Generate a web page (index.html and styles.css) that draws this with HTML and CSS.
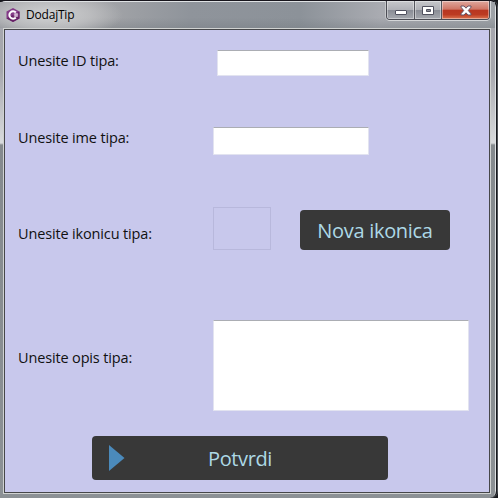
FILE: index.html
```html
<!DOCTYPE html>
<html lang="sr-Latn">
<head>
<meta charset="utf-8">
<title>DodajTip</title>
<link rel="stylesheet" href="styles.css">
</head>
<body>
<div class="window">
  <header class="titlebar">
    <svg class="app-icon" width="14" height="14" viewBox="0 0 14 14">
      <path d="M7 0 13.500 3.500v7L7 14 .5 10.500v-7z" fill="#843b88"/>
      <path d="M.5 10.500 13.500 3.500v7L7 14z" fill="#652065"/>
      <path d="M9.800 4.500A3.700 3.700 0 1 0 9.800 9.500" fill="none" stroke="#fff" stroke-width="2"/>
      <path d="M7.800 6.200h4.400M7.800 7.900h4.400M9.200 5v4M10.900 5v4" stroke="#f2e5f3" stroke-width=".8"/>
    </svg>
    <h1 class="title">DodajTip</h1>
    <div class="controls">
      <button class="control minimize" aria-label="Minimize"><svg width="14" height="12" viewBox="0 0 14 12"><rect x="1.500" y="5.500" width="11" height="4" rx=".5" fill="#fff" stroke="#50515f"/></svg></button>
      <button class="control maximize" aria-label="Maximize"><svg width="14" height="12" viewBox="0 0 14 12"><path fill-rule="evenodd" d="M1.500 1.500h11v8h-11zM5.500 4.500h4v2h-4z" fill="#fff" stroke="#50515f"/></svg></button>
      <button class="control close" aria-label="Close"><svg width="14" height="12" viewBox="0 0 14 12"><path d="M2 1h3l2 2.200L9 1h3v1.200L9.300 5.500 12 8.800V10H9L7 7.800 5 10H2V8.800l2.700-3.300L2 2.200z" fill="#fff" stroke="#645264"/></svg></button>
    </div>
  </header>
  <main class="client">
    <div class="row row-id"><label class="label" for="type-id">Unesite ID tipa:</label><input class="field" id="type-id"></div>
    <div class="row row-name"><label class="label" for="type-name">Unesite ime tipa:</label><input class="field" id="type-name"></div>
    <div class="row row-icon"><span class="label">Unesite ikonicu tipa:</span><div class="preview"></div><button class="action pick">Nova ikonica</button></div>
    <div class="row row-description"><label class="label" for="type-description">Unesite opis tipa:</label><textarea class="field" id="type-description"></textarea></div>
    <button class="action confirm"><svg class="arrow" width="16" height="26" viewBox="0 0 16 26"><path d="M0 0 15.500 13 0 26z" fill="#4b8abb"/></svg><span class="confirm-text">Potvrdi</span></button>
  </main>
</div>
</body>
</html>
```

FILE: styles.css
```css
* { box-sizing: border-box; }
body { margin: 0; background: #17191d; font-family: "Open Sans", "Noto Sans", sans-serif; color: #111; }
button { font-family: inherit; padding: 0; margin: 0; border: 0; }
.window {
  width: 497px; height: 498px; padding: 1px 5px 0 4px;
  border-top: 1px solid #17151c;
  border-right: 1px solid #17191d;
  border-radius: 5px 7px 7px 0;
  background: linear-gradient(#a5a6ad 0, #a7a8ae 70px, #d9dbdd 142px, #858a8e 144px, #8c9195 100%);
  box-shadow: inset -1px 1px #dfe2e4, 1px 0 #505358;
}
.titlebar {
  display: flex; height: 26px; margin: 0 -4px 0 -4px; padding-left: 6px;
  background:
    radial-gradient(ellipse 75px 24px at 48px 13px, #d0d1d2 0, #c1c2c4cc 55%, transparent 100%),
    linear-gradient(transparent 60%, #747a8066),
    linear-gradient(90deg, #9b9ca1, #a6a7aa 90px, #8f949b 190px, #8c9299 300px, #a9abb1 380px, #9ea2a7);
}
.app-icon { margin-top: 6px; }
.title { margin: 5px 0 0 6px; font-size: 12px; line-height: 16px; font-weight: 400; letter-spacing: -.2px; color: #000; }
.controls {
  display: flex; height: 19px; margin: -1px 5px 0 auto;
  border: 1px solid #4b4c54; border-top: 0; border-radius: 0 0 4px 4px;
  box-shadow: 0 1px #d4d6d8, 1px 0 #d4d6d8, -1px 0 #c5c7ca; overflow: hidden;
}
.control {
  display: flex; justify-content: center; align-items: center; height: 18px; padding-top: 2px;
  border-right: 1px solid #55565d;
  background: linear-gradient(#c6c7cb 0, #b0b1b7 48%, #8a8d96 52%, #a5a8ae);
  box-shadow: inset 0 0 0 1px #ffffff66;
}
.minimize { width: 28px; }
.maximize { width: 27px; }
.close { width: 47px; border: 0; background: linear-gradient(#dfa89e 0, #cf7565 46%, #b83621 50%, #bc3b22 75%, #db7450); }
.client {
  width: 486px; height: 464px; display: flex; flex-direction: column; align-items: flex-start;
  border: 1px solid #46474a; outline: 1px solid #d0d2d1; outline-offset: 0;
  margin-top: 1px; background: #c8c8ec;
}
.row { display: flex; align-items: flex-start; padding-left: 13px; }
.label { flex: none; width: 195px; font-size: 14.500px; line-height: 20px; letter-spacing: -.15px; }
.field {
  display: block; width: 157px; margin: 0; padding: 2px; resize: none; outline: 0;
  border: 1px solid #e2e3f0; border-top-color: #abadb3; border-radius: 1px; background: #fff;
}
.row-id { height: 97px; padding-top: 20px; }
.row-id .field { width: 152px; height: 26px; margin-left: 4px; }
.row-name { height: 80px; }
.row-name .field { width: 156px; height: 28px; }
.row-id .label, .row-name .label { margin-top: 1px; }
.row-icon { height: 113px; }
.row-icon .label { margin-top: 17px; }
.preview { width: 58px; height: 43px; border: 1px solid #b8b8dc; }
.action { display: flex; align-items: center; border-radius: 4px; background: #383838; color: #add8e6; font-size: 20px; line-height: 28px; }
.pick { width: 150px; height: 40px; margin: 3px 0 0 29px; padding-top: 1px; justify-content: center; letter-spacing: -.3px; }
.row-description { height: 116px; }
.row-description .label { margin-top: 28px; }
.row-description .field { width: 256px; height: 91px; }
.confirm { width: 296px; height: 44px; margin-left: 87px; padding-left: 17px; }
.confirm-text { flex: 1; padding: 1px 33px 0 0; text-align: center; letter-spacing: -.4px; }
```
